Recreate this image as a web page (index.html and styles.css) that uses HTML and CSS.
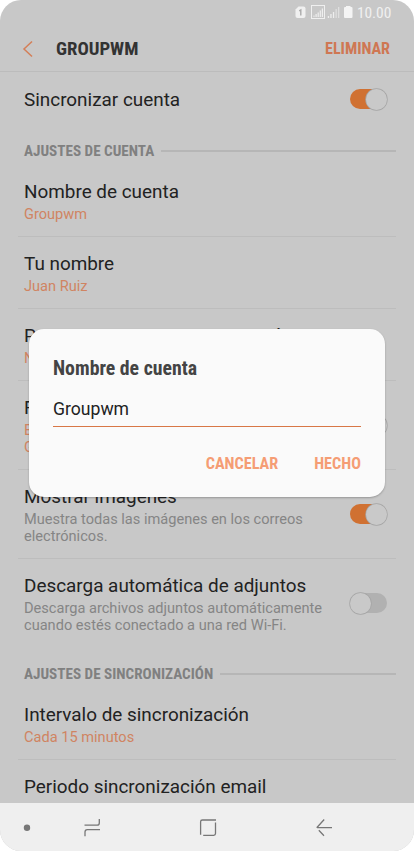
FILE: index.html
```html
<!DOCTYPE html>
<html lang="es">
<head>
<meta charset="utf-8">
<title>Groupwm</title>
<link rel="stylesheet" href="styles.css">
</head>
<body>
<div class="phone">
  <div class="status">
    <svg width="62" height="16" viewBox="0 0 62 16">
      <path d="M3.500 .5h5q2 0 2 2v7.500q0 2-2 2h-6q-2 0-2-2V3.500z" fill="#f0f0f0"/>
      <path d="M4.200 4.800L5.800 4v5.500" fill="none" stroke="#aaa" stroke-width="1.400"/>
      <rect x="16.500" y="-.5" width="13" height="13" fill="none" stroke="#efefef"/>
      <path d="M18.500 11h1V9.500h-1zM20.500 11h1.200V8h-1.200zM22.600 11h1.200V6.500h-1.200zM24.700 11h1.200V4.500h-1.200zM26.800 11h1.200V2.500h-1.200z" fill="#efefef"/>
      <path d="M32.800 12h1.300v-2h-1.300zM35.300 12h1.300V8h-1.300zM37.900 12h1.300V6h-1.300z" fill="#eee"/>
      <path d="M40.500 12h1.300V3h-1.300zM43 12h1.300V1H43z" fill="#dfdfdf"/>
      <path d="M49 2q0-1 1-1h1V0h4.500v1h1q1 0 1 1v9q0 1-1 1H50q-1 0-1-1z" fill="#f4f4f4"/>
    </svg>
    <span class="clock">10.00</span>
  </div>
  <header class="bar">
    <svg class="back" width="12" height="18" viewBox="0 0 12 18"><path d="M10 1.500L2 9l8 7.500" fill="none" stroke="#d47f58" stroke-width="1.500"/></svg>
    <h1 class="bar-title">GROUPWM</h1>
    <span class="bar-action">ELIMINAR</span>
  </header>
  <main class="list">
    <div class="row first"><div class="text"><div class="title">Sincronizar cuenta</div></div><span class="switch on"></span></div>
    <div class="section"><span>AJUSTES DE CUENTA</span></div>
    <div class="row"><div class="text"><div class="title">Nombre de cuenta</div><div class="sub accent">Groupwm</div></div></div>
    <div class="row"><div class="text"><div class="title">Tu nombre</div><div class="sub accent">Juan Ruiz</div></div></div>
    <div class="row"><div class="text"><div class="title">Poner siempre en Cc/Cco a mí</div><div class="sub accent">Ninguno</div></div></div>
    <div class="row"><div class="text"><div class="title">Firma</div><div class="sub accent">Enviado desde mi smartphone Samsung<br>Galaxy.</div></div><span class="switch on"></span></div>
    <div class="row"><div class="text"><div class="title">Mostrar imágenes</div><div class="sub">Muestra todas las imágenes en los correos<br>electrónicos.</div></div><span class="switch on"></span></div>
    <div class="row last"><div class="text"><div class="title">Descarga automática de adjuntos</div><div class="sub">Descarga archivos adjuntos automáticamente<br>cuando estés conectado a una red Wi-Fi.</div></div><span class="switch"></span></div>
    <div class="section sync"><span>AJUSTES DE SINCRONIZACIÓN</span></div>
    <div class="row"><div class="text"><div class="title">Intervalo de sincronización</div><div class="sub accent">Cada 15 minutos</div></div></div>
    <div class="row last"><div class="text"><div class="title">Periodo sincronización email</div></div></div>
  </main>
  <nav class="nav">
    <svg width="414" height="48" viewBox="0 0 414 48" fill="none" stroke="#777" stroke-width="1.300">
      <circle cx="27" cy="24.800" r="3.200" fill="#777" stroke="none"/>
      <path d="M84.500 22.200H97q2.300 0 2.300-2.300V16M100 26.600H87.300q-2.300 0-2.300 2.300v4.300"/>
      <path d="M200.600 31.800V18.800q0-1.800 1.800-1.800H216M215.500 19.500v11q0 1.800-1.800 1.800h-10.500"/>
      <path d="M332 24.700h-15M324.200 16.500l-7.500 8.200M318.800 27.300l5.200 5.400"/>
    </svg>
  </nav>
  <div class="dialog">
    <h2 class="dialog-title">Nombre de cuenta</h2>
    <div class="field">Groupwm</div>
    <div class="actions"><span>CANCELAR</span><span>HECHO</span></div>
  </div>
</div>
</body>
</html>
```
FILE: styles.css
```css
* { box-sizing: border-box; }
body { margin: 0; background: #fff; font-family: Roboto, "Liberation Sans", sans-serif; }
.phone { position: relative; width: 414px; height: 851px; border-radius: 21px; overflow: hidden; background: #c8c8c8; display: flex; flex-direction: column; }
.status { height: 26px; flex: none; display: flex; align-items: flex-start; padding: 6px 24px 0 0; justify-content: flex-end; }
.status svg { overflow: visible; }
.clock { font-size: 15.5px; line-height: 15px; color: #f0f0f0; font-stretch: 75%; letter-spacing: -.1px; width: 33px; white-space: nowrap; }
.bar { height: 46px; flex: none; display: flex; align-items: center; padding: 0 24px 0 22px; border-bottom: 1px solid #bcbcbc; }
.bar-title { margin: 0 0 0 22px; padding-top: 1px; font-size: 18.8px; line-height: 22px; font-weight: 700; font-stretch: 75%; color: #333; flex: 1; }
.bar-action { padding-top: 1px; font-size: 16.2px; letter-spacing: -.05px; line-height: 20px; font-weight: 700; font-stretch: 75%; color: #cf7753; }
.list { flex: 1; min-height: 0; overflow: hidden; padding: 0 18px; }
.row { display: flex; align-items: center; justify-content: space-between; border-bottom: 1px solid #bdbdbd; padding: 15px 9.5px 13px 6px; }
.row.first { height: 64px; padding: 0 9.5px 8px 6px; border: 0; }
.row.last { border: 0; }
.title { font-size: 18.9px; line-height: 24px; color: #222; white-space: nowrap; }
.sub { font-size: 14.6px; line-height: 17px; color: #858585; padding-top: 2px; white-space: nowrap; }
.sub.accent { color: #d08462; }
.section { display: flex; align-items: center; gap: 7px; height: 29px; padding-left: 6px; font-size: 15.15px; font-weight: 700; font-stretch: 75%; color: #808080; white-space: nowrap; }
.section.sync { margin-top: 12px; }
.section::after { content: ""; flex: 1; height: 2px; background: #b6b6b6; }
.switch { width: 37px; height: 20px; border-radius: 10px; background: #b1b1b1; display: flex; align-items: center; flex: none; margin-bottom: 2px; }
.switch::before { content: ""; width: 21px; height: 21px; border-radius: 50%; background: #c9c9c9; box-shadow: 0 0 0 .7px #a5a5a5; flex: none; }
.switch.on { background: #d07132; justify-content: flex-end; }
.nav { height: 48px; flex: none; background: #efefef; }
.nav svg { display: block; }
.dialog { position: absolute; left: 29px; top: 329px; width: 356px; height: 168px; border-radius: 15px; background: #fafafa; padding: 28px 24px 0; box-shadow: 0 1px 2px rgba(0,0,0,.25); }
.dialog-title { margin: 0; font-size: 19.8px; line-height: 24px; font-weight: 700; font-stretch: 75%; color: #444; }
.field { margin-top: 13px; height: 33px; padding-top: 4px; font-size: 17.6px; line-height: 22px; color: #222; border-bottom: 1.5px solid #d87746; }
.actions { display: flex; justify-content: flex-end; gap: 36px; margin-top: 26px; font-size: 16.2px; line-height: 22px; font-weight: 700; font-stretch: 75%; color: #f59d74; }
```
